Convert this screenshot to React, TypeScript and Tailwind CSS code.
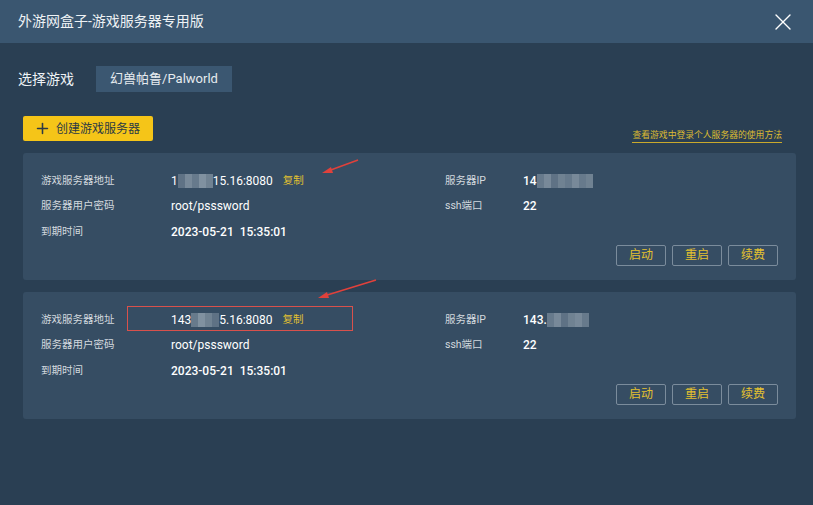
import { X, Plus } from 'lucide-react';

const FONT = { fontFamily: 'Roboto, "Noto Sans CJK SC", sans-serif' };

// mosaic blocks that stand in for the blurred part of an address
const Mosaic = ({ cells }: { cells: number[] }) => (
  <span className="inline-flex h-[14px] align-middle">
    {cells.map((o, i) => (
      <span key={i} className="h-full w-[7px]" style={{ backgroundColor: `rgba(220,228,236,${o})` }} />
    ))}
  </span>
);

type Server = {
  addr: React.ReactNode;
  ip: React.ReactNode;
  marked?: boolean;
};

const Row = ({ label, children }: { label: string; children: React.ReactNode }) => (
  <div className="flex h-[25.5px] items-center">
    <div className="w-[130px] text-[10.5px] text-[#d3d9df]">{label}</div>
    <div className="flex items-center text-[12px] text-white">{children}</div>
  </div>
);

const RightRow = ({ label, children }: { label: string; children: React.ReactNode }) => (
  <div className="flex h-[25.5px] items-center">
    <div className="w-[78px] text-[10.5px] text-[#d3d9df]">{label}</div>
    <div className="flex items-center text-[12px] font-medium text-white">{children}</div>
  </div>
);

const ServerCard = ({ server }: { server: Server }) => (
  <div className="relative flex h-[127px] flex-col rounded-[3px] bg-[#364d63] pt-[15px] pr-[18px] pb-[15px] pl-[18px]">
    <div className="flex">
      <div className="w-[404px]">
        <Row label="游戏服务器地址">
          {server.addr}
          <span className="ml-[10px] text-[10.5px] text-[#e2c131]">复制</span>
        </Row>
        <Row label="服务器用户密码">root/psssword</Row>
        <Row label="到期时间">
          <span className="font-medium">2023-05-21&nbsp;&nbsp;15:35:01</span>
        </Row>
      </div>
      <div>
        <RightRow label="服务器IP">{server.ip}</RightRow>
        <RightRow label="ssh端口">22</RightRow>
      </div>
    </div>
    <div className="mt-auto flex justify-end gap-[6px]">
      {['启动', '重启', '续费'].map((t) => (
        <button
          key={t}
          className="h-[21px] w-[50px] rounded-[2px] border border-[#7b8c9c] text-[12px] leading-none text-[#e4c12f]"
        >
          {t}
        </button>
      ))}
    </div>
    {server.marked && (
      <div className="absolute top-[14px] left-[104px] h-[25px] w-[226px] border border-[#d9514c]" />
    )}
  </div>
);

const servers: Server[] = [
  {
    addr: (
      <>
        1<Mosaic cells={[0.25, 0.4, 0.3, 0.45, 0.35]} />
        15.16:8080
      </>
    ),
    ip: (
      <>
        14<Mosaic cells={[0.3, 0.4, 0.25, 0.35, 0.3, 0.4, 0.3, 0.35]} />
      </>
    ),
  },
  {
    addr: (
      <>
        143<Mosaic cells={[0.3, 0.45, 0.35, 0.25]} />
        5.16:8080
      </>
    ),
    ip: (
      <>
        143.<Mosaic cells={[0.3, 0.4, 0.25, 0.35, 0.4, 0.3]} />
      </>
    ),
    marked: true,
  },
];

const App = () => {
  return (
    <div className="relative flex h-[505px] w-full flex-col overflow-hidden bg-[#2a3f53]" style={FONT}>
      {/* Title bar */}
      <div className="flex h-[43px] shrink-0 items-center justify-between bg-[#3a5670] pr-[16px] pl-[18px]">
        <span className="text-[14px] text-[#eef2f5]">外游网盒子-游戏服务器专用版</span>
        <X size={28} strokeWidth={1.2} className="text-white" />
      </div>

      {/* Game select */}
      <div className="mt-[23px] flex items-center pl-[18px]">
        <span className="w-[78px] text-[14px] text-[#eef2f5]">选择游戏</span>
        <div className="flex h-[26px] w-[136px] items-center justify-center bg-[#3b5771] text-[13px] text-[#e6ebef]">
          幻兽帕鲁/Palworld
        </div>
      </div>

      {/* Actions */}
      <div className="mt-[24px] flex items-end justify-between pr-[31px] pl-[23px]">
        <button className="flex h-[25px] w-[130px] items-center gap-[5px] rounded-[2px] bg-[#f5c518] pl-[11px] text-[12px] text-[#2c3a45]">
          <Plus size={17} strokeWidth={2.2} />
          创建游戏服务器
        </button>
        <a className="mb-[-2px] border-b border-[#c9a92c] pb-[1px] text-[8.8px] leading-[12px] text-[#dcbb32]">
          查看游戏中登录个人服务器的使用方法
        </a>
      </div>

      {/* Server list */}
      <div className="mt-[12px] flex flex-col gap-[12px] pr-[17px] pl-[23px]">
        {servers.map((s, i) => (
          <ServerCard key={i} server={s} />
        ))}
      </div>

      {/* annotation arrows */}
      <svg className="pointer-events-none absolute inset-0" width="813" height="505">
        <g stroke="#e0413b" strokeWidth="1.5" fill="#e0413b">
          <line x1="358" y1="160" x2="328" y2="171" />
          <polygon points="322,173 331,167 333,173" stroke="none" />
          <line x1="376" y1="280" x2="324" y2="296" />
          <polygon points="318,298 327,292 329,298" stroke="none" />
        </g>
      </svg>
    </div>
  );
};

export default App;
